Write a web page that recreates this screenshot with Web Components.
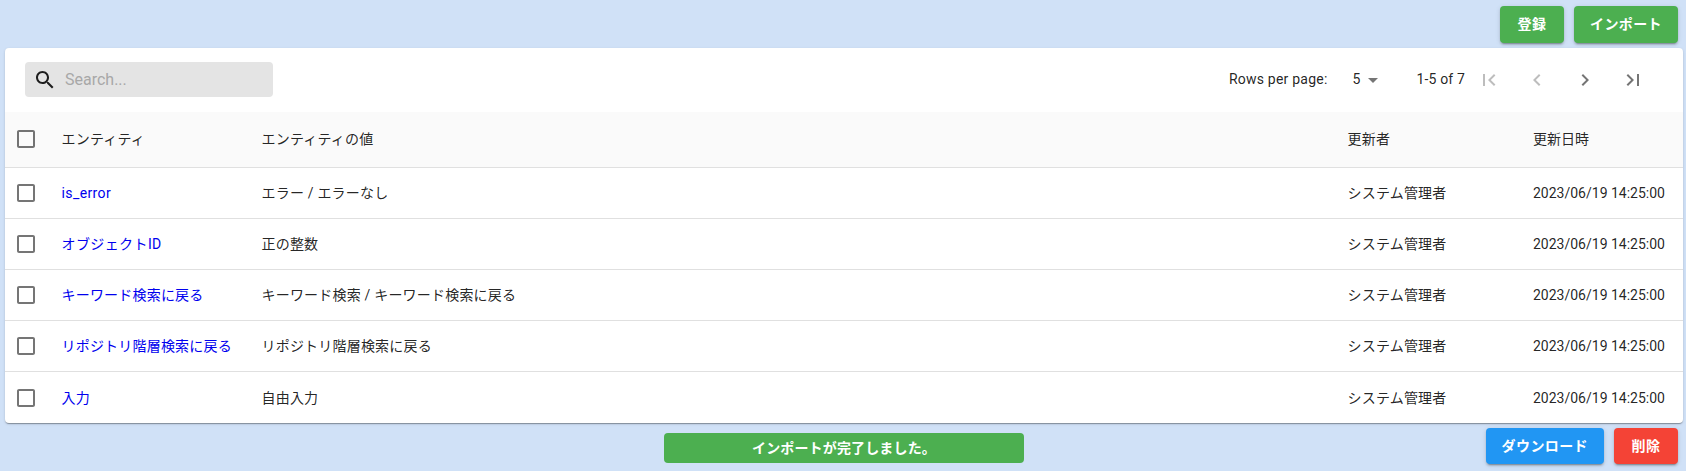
<!DOCTYPE html>
<html lang="ja">
<head>
<meta charset="utf-8">
<title>エンティティ</title>
<style>
  html, body{
    margin: 0;
    height: 100%;
    overflow: hidden;
    background-color: #d0e1f7;
  }
  body{
    font-family: Roboto, "Noto Sans CJK JP", sans-serif;
    font-size: 14px;
    color: rgba(0, 0, 0, 0.87);
  }
</style>
</head>
<body>
<entity-page>
  <app-button slot="top" color="#4caf50">登録</app-button>
  <app-button slot="top" color="#4caf50">インポート</app-button>

  <entity-table slot="table">
    <table-toolbar slot="toolbar"></table-toolbar>
    <entity-row header>
      <span slot="name">エンティティ</span>
      <span slot="value">エンティティの値</span>
      <span slot="user">更新者</span>
      <span slot="date">更新日時</span>
    </entity-row>
    <entity-row>
      <a slot="name" class="latin wide">is_error</a>
      <span slot="value">エラー / エラーなし</span>
      <span slot="user">システム管理者</span>
      <span slot="date" class="latin">2023/06/19 14:25:00</span>
    </entity-row>
    <entity-row>
      <a slot="name" class="wide">オブジェクトID</a>
      <span slot="value">正の整数</span>
      <span slot="user">システム管理者</span>
      <span slot="date" class="latin">2023/06/19 14:25:00</span>
    </entity-row>
    <entity-row>
      <a slot="name">キーワード検索に戻る</a>
      <span slot="value">キーワード検索 / キーワード検索に戻る</span>
      <span slot="user">システム管理者</span>
      <span slot="date" class="latin">2023/06/19 14:25:00</span>
    </entity-row>
    <entity-row>
      <a slot="name">リポジトリ階層検索に戻る</a>
      <span slot="value">リポジトリ階層検索に戻る</span>
      <span slot="user">システム管理者</span>
      <span slot="date" class="latin">2023/06/19 14:25:00</span>
    </entity-row>
    <entity-row last>
      <a slot="name">入力</a>
      <span slot="value">自由入力</span>
      <span slot="user">システム管理者</span>
      <span slot="date" class="latin">2023/06/19 14:25:00</span>
    </entity-row>
  </entity-table>

  <app-button slot="bottom" color="#2196f3">ダウンロード</app-button>
  <app-button slot="bottom" color="#f44336">削除</app-button>

  <app-snackbar slot="snackbar">インポートが完了しました。</app-snackbar>
</entity-page>

<script>
// material icon paths
var ICONS = {
  search: 'M15.5 14h-.79l-.28-.27C15.41 12.59 16 11.11 16 9.5 16 5.91 13.09 3 9.5 3S3 5.91 3 9.5 5.91 16 9.5 16c1.61 0 3.09-.59 4.23-1.57l.27.28v.79l5 4.99L20.49 19l-4.99-5zm-6 0C7.01 14 5 11.99 5 9.5S7.01 5 9.5 5 14 7.01 14 9.5 11.99 14 9.5 14z',
  first: 'M18.41 16.59L13.82 12l4.59-4.59L17 6l-6 6 6 6zM6 6h2v12H6z',
  prev: 'M15.41 7.41L14 6l-6 6 6 6 1.41-1.41L10.83 12z',
  next: 'M10 6L8.59 7.41 13.17 12l-4.58 4.59L10 18l6-6z',
  last: 'M5.59 7.41L10.18 12l-4.59 4.59L7 18l6-6-6-6zM16 6h2v12h-2z',
  caret: 'M7 10l5 5 5-5z',
  checkbox: 'M19 5v14H5V5h14m0-2H5c-1.1 0-2 .9-2 2v14c0 1.1.9 2 2 2h14c1.1 0 2-.9 2-2V5c0-1.1-.9-2-2-2z'
};

function icon(name, fill){
  return `<svg width="24" height="24" viewBox="0 0 24 24" fill="${fill}"><path d="${ICONS[name]}"/></svg>`;
}

class EntityPage extends HTMLElement {
  constructor(){
    super();
    var shadowRoot = this.attachShadow({mode: 'open'});
    shadowRoot.innerHTML = `
      <style>
        :host{
          display: flex;
          flex-direction: column;
          height: 471px;
          padding: 6px 3px 0 5px;
          box-sizing: border-box;
        }
        .actions{
          display: flex;
          justify-content: flex-end;
          gap: 10px;
          padding-right: 5px;
        }
        #top{
          height: 42px;
        }
        #bottom{
          padding-top: 5px;
        }
      </style>
      <div class="actions" id="top"><slot name="top"></slot></div>
      <slot name="table"></slot>
      <div class="actions" id="bottom"><slot name="bottom"></slot></div>
      <slot name="snackbar"></slot>
    `;
  }
}
customElements.define('entity-page', EntityPage);

class AppButton extends HTMLElement {
  constructor(){
    super();
    var shadowRoot = this.attachShadow({mode: 'open'});
    shadowRoot.innerHTML = `
      <style>
        :host{
          display: flex;
          align-items: center;
          justify-content: center;
          height: 37px;
          padding: 0 16px 3px;
          box-sizing: border-box;
          min-width: 64px;
          border-radius: 4px;
          color: #fff;
          font-weight: 700;
          font-size: 14px;
          letter-spacing: 0.4px;
          box-shadow: 0 3px 1px -2px rgba(0,0,0,.2), 0 2px 2px 0 rgba(0,0,0,.14), 0 1px 5px 0 rgba(0,0,0,.12);
        }
        :host([slot="bottom"]){
          height: 36px;
        }
      </style>
      <slot></slot>
    `;
    this.style.backgroundColor = this.getAttribute('color');
  }
}
customElements.define('app-button', AppButton);

class EntityTable extends HTMLElement {
  constructor(){
    super();
    var shadowRoot = this.attachShadow({mode: 'open'});
    shadowRoot.innerHTML = `
      <style>
        :host{
          display: block;
          height: 375px;
          background-color: #fff;
          border-radius: 4px;
          overflow: hidden;
          box-shadow: 0 2px 1px -1px rgba(0,0,0,.2), 0 1px 1px 0 rgba(0,0,0,.14), 0 1px 3px 0 rgba(0,0,0,.12);
        }
      </style>
      <slot name="toolbar"></slot>
      <slot></slot>
    `;
  }
}
customElements.define('entity-table', EntityTable);

class TableToolbar extends HTMLElement {
  constructor(){
    super();
    var shadowRoot = this.attachShadow({mode: 'open'});
    shadowRoot.innerHTML = `
      <style>
        :host{
          display: flex;
          align-items: center;
          height: 64px;
          padding: 0 26px 0 20px;
        }
        #search{
          display: flex;
          align-items: center;
          gap: 8px;
          width: 248px;
          height: 35px;
          margin-bottom: 1px;
          padding-left: 8px;
          box-sizing: border-box;
          background-color: #e4e4e4;
          border-radius: 4px;
          color: #a8a8a8;
          font-size: 16px;
        }
        #pagination{
          display: flex;
          align-items: center;
          margin-left: auto;
          letter-spacing: 0.15px;
        }
        #pagination span{
          padding-bottom: 2px;
        }
        #rows-label{
          letter-spacing: 0.22px;
        }
        #per-page{
          display: flex;
          align-items: center;
          margin-left: 25px;
          width: 64px;
        }
        .page-button{
          display: flex;
          align-items: center;
          justify-content: center;
          width: 48px;
          height: 48px;
        }
        svg{
          flex: none;
        }
      </style>
      <div id="search">${icon('search', 'rgba(0,0,0,0.87)')}<span>Search...</span></div>
      <div id="pagination">
        <span id="rows-label">Rows per page:</span>
        <div id="per-page"><span>5</span>${icon('caret', 'rgba(0,0,0,0.54)')}</div>
        <span id="range">1-5 of 7</span>
        <div class="page-button">${icon('first', 'rgba(0,0,0,0.26)')}</div>
        <div class="page-button">${icon('prev', 'rgba(0,0,0,0.26)')}</div>
        <div class="page-button">${icon('next', 'rgba(0,0,0,0.54)')}</div>
        <div class="page-button">${icon('last', 'rgba(0,0,0,0.54)')}</div>
      </div>
    `;
  }
}
customElements.define('table-toolbar', TableToolbar);

class EntityRow extends HTMLElement {
  constructor(){
    super();
    var shadowRoot = this.attachShadow({mode: 'open'});
    shadowRoot.innerHTML = `
      <style>
        :host{
          display: grid;
          grid-template-columns: 56.5px 200px 1fr 185.5px 150px;
          align-items: center;
          height: 51px;
          box-sizing: border-box;
          border-bottom: 1px solid #e0e0e0;
        }
        :host([header]){
          height: 56px;
          padding-bottom: 1px;
          background-color: #fafafa;
        }
        :host([last]){
          border-bottom: none;
        }
        #check{
          display: flex;
          padding-left: 9px;
        }
        ::slotted(a){
          color: #0000ee;
        }
        /* the kana sit lower than the latin text in this font */
        ::slotted(:not(.latin)){
          display: block;
          padding-bottom: 2px;
        }
        ::slotted([slot="name"]), ::slotted([slot="value"]), ::slotted([slot="user"]){
          letter-spacing: 0.2px;
        }
        ::slotted(.wide){
          letter-spacing: 0.4px;
        }
      </style>
      <div id="check">${icon('checkbox', 'rgba(0,0,0,0.54)')}</div>
      <div><slot name="name"></slot></div>
      <div><slot name="value"></slot></div>
      <div><slot name="user"></slot></div>
      <div><slot name="date"></slot></div>
    `;
  }
}
customElements.define('entity-row', EntityRow);

class AppSnackbar extends HTMLElement {
  constructor(){
    super();
    var shadowRoot = this.attachShadow({mode: 'open'});
    shadowRoot.innerHTML = `
      <style>
        :host{
          position: fixed;
          left: 664px;
          bottom: 8px;
          display: flex;
          align-items: center;
          justify-content: center;
          width: 360px;
          height: 30px;
          padding-bottom: 3px;
          box-sizing: border-box;
          background-color: #4caf50;
          border-radius: 4px;
          color: #fff;
          font-weight: 700;
          font-size: 14px;
          letter-spacing: 0.15px;
        }
      </style>
      <slot></slot>
    `;
  }
}
customElements.define('app-snackbar', AppSnackbar);
</script>
</body>
</html>
